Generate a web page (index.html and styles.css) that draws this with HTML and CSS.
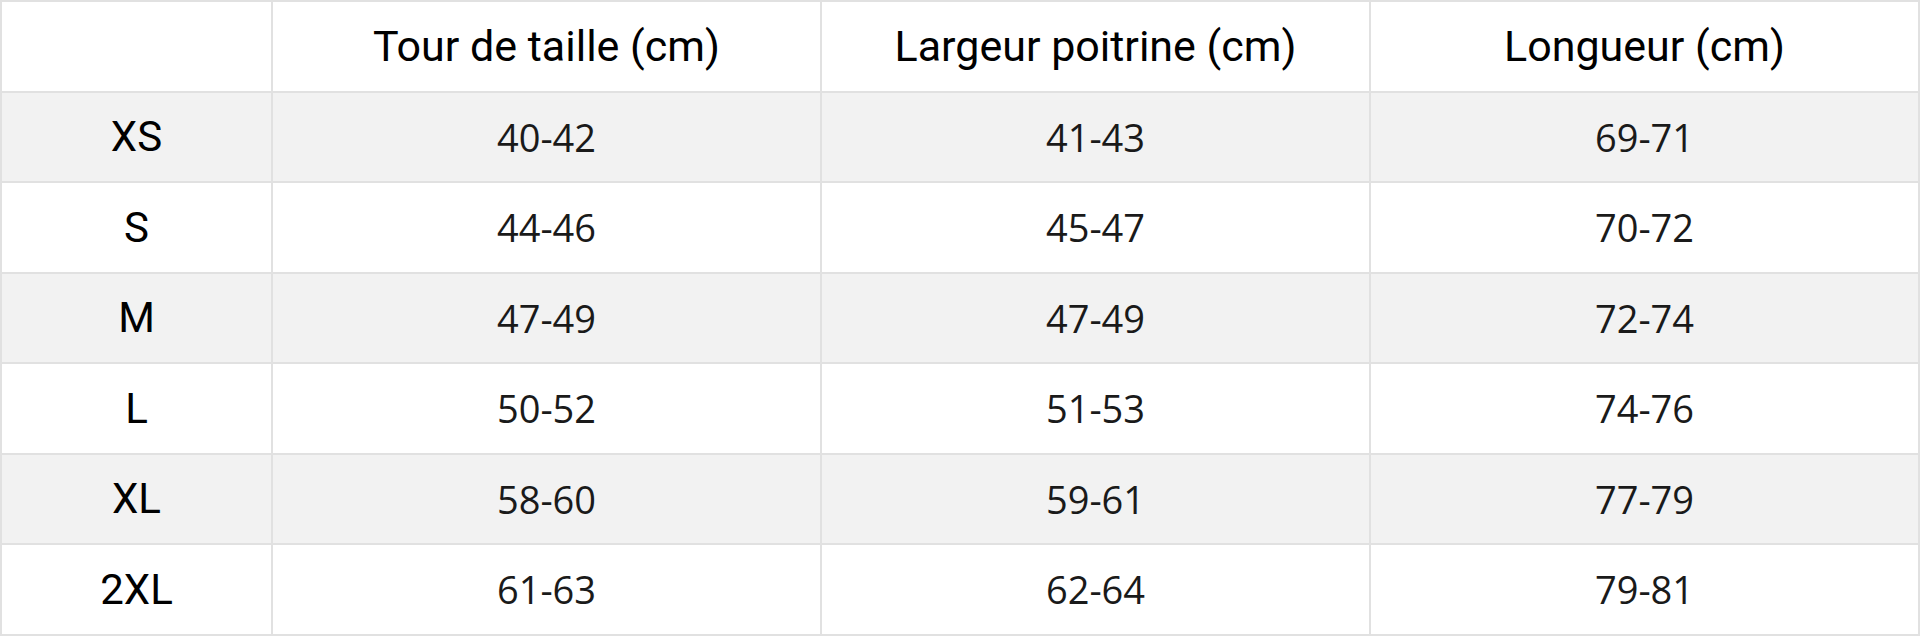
FILE: index.html
```html
<!DOCTYPE html>
<html lang="fr">
<head>
<meta charset="utf-8">
<title>Guide des tailles</title>
<link rel="stylesheet" href="styles.css">
</head>
<body>
<table class="size-table">
  <colgroup>
    <col class="col-size">
    <col class="col-data">
    <col class="col-data">
    <col class="col-data">
  </colgroup>
  <thead>
    <tr>
      <th></th>
      <th>Tour de taille (cm)</th>
      <th>Largeur poitrine (cm)</th>
      <th>Longueur (cm)</th>
    </tr>
  </thead>
  <tbody>
    <tr class="alt"><td class="size">XS</td><td>40-42</td><td>41-43</td><td>69-71</td></tr>
    <tr><td class="size">S</td><td>44-46</td><td>45-47</td><td>70-72</td></tr>
    <tr class="alt"><td class="size">M</td><td>47-49</td><td>47-49</td><td>72-74</td></tr>
    <tr><td class="size">L</td><td>50-52</td><td>51-53</td><td>74-76</td></tr>
    <tr class="alt"><td class="size">XL</td><td>58-60</td><td>59-61</td><td>77-79</td></tr>
    <tr><td class="size">2XL</td><td>61-63</td><td>62-64</td><td>79-81</td></tr>
  </tbody>
</table>
</body>
</html>
```
FILE: styles.css
```css
html, body {
  margin: 0;
  padding: 0;
  background: #ffffff;
}

.size-table {
  width: 1920px;
  border-collapse: collapse;
  table-layout: fixed;
  color: #000000;
}

.col-size {
  width: 271px;
}

.size-table th,
.size-table td {
  border: 2px solid #e1e1e1;
  height: 88.5px;
  padding: 0;
  text-align: center;
  vertical-align: middle;
}

.size-table th {
  font-family: "Roboto", "Liberation Sans", sans-serif;
  font-size: 43px;
  font-weight: normal;
}

.size-table td {
  font-family: "Open Sans", "DejaVu Sans", sans-serif;
  font-size: 38px;
  color: #1a1a1a;
}

.size-table td.size {
  font-family: "Roboto", "Liberation Sans", sans-serif;
  font-size: 42px;
  color: #000000;
}

.size-table tr.alt {
  background: #f2f2f2;
}
```
